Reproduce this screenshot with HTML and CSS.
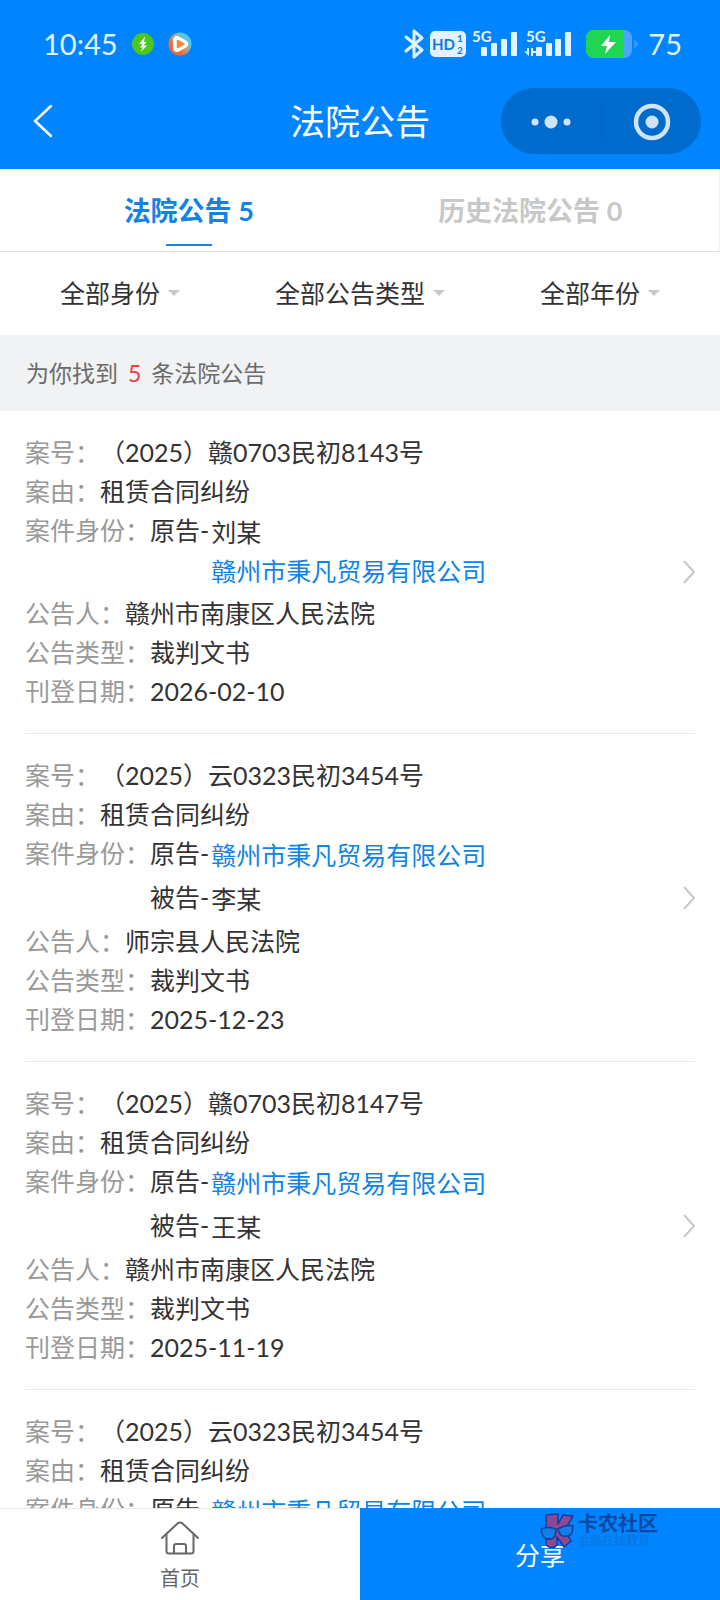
FILE: index.html
```html
<!DOCTYPE html>
<html lang="zh-CN">
<head>
  <meta charset="UTF-8">
  <meta name="viewport" content="width=device-width, initial-scale=1.0">
  <title>法院公告</title>
  <link rel="stylesheet" href="styles.css">
</head>
<body>
  <header class="header">
    <div class="status-bar">
      <div class="status-left">
        <span class="time">10:45</span>
        <svg width="22" height="22" viewBox="0 0 22 22">
          <circle cx="11" cy="11" r="11" fill="#4cc71f"/>
          <path d="M13 3.500 7 11h3.500L8 14.500h3L8.500 19 15 12.500h-3.500L14.500 9H12z" fill="#fff"/>
        </svg>
        <svg class="player" width="24" height="24" viewBox="0 0 24 24">
          <defs>
            <linearGradient id="ring" x1="0" y1="1" x2="1" y2="0">
              <stop offset="0.300" stop-color="#f26a35"/>
              <stop offset="0.550" stop-color="#b8a08c"/>
              <stop offset="0.750" stop-color="#4fcbe8"/>
            </linearGradient>
          </defs>
          <circle cx="12" cy="12" r="11.500" fill="url(#ring)"/>
          <path d="M9 8v8l7-4z" fill="#fff" stroke="#fff" stroke-width="8" stroke-linejoin="round"/>
          <path d="M9.500 8.500v7l6.500-3.500z" fill="#f0883e" stroke="#f0883e" stroke-width="1.500" stroke-linejoin="round"/>
        </svg>
      </div>
      <div class="status-right">
        <svg width="20" height="30" viewBox="0 0 20 30">
          <path d="M2 8l16 13-8 7V2l8 7L2 22" fill="none" stroke="#e3f2ff" stroke-width="3" stroke-linejoin="round" stroke-linecap="round"/>
        </svg>
        <svg width="36" height="28" viewBox="0 0 36 28">
          <rect x="0" y="1" width="36" height="26" rx="5" fill="#e3f2ff"/>
          <g class="badge-text">
            <text x="2" y="20" font-size="15">HD</text>
            <text x="27" y="12" font-size="10">1</text>
            <text x="27" y="24" font-size="10">2</text>
          </g>
        </svg>
        <svg width="46" height="36" viewBox="0 -4 46 36">
          <text class="net-text" x="0" y="12" font-size="15">5G</text>
          <g fill="#e3f2ff">
            <rect x="9" y="17" width="6" height="9" rx="1"/>
            <rect x="19" y="13" width="6" height="13" rx="1"/>
            <rect x="29" y="9" width="6" height="17" rx="1"/>
            <rect x="39" y="2" width="6" height="24" rx="1"/>
          </g>
        </svg>
        <svg width="48" height="36" viewBox="0 -4 48 36">
          <text class="net-text" x="2" y="12" font-size="15">5G</text>
          <g fill="#e3f2ff">
            <path d="M3 18h2v8L0 21.500h3zM7 26h2v-3h3v3h2v-8h-2v3H9v-3H7z"/>
            <rect x="12" y="17" width="6" height="9" rx="1"/>
            <rect x="22" y="13" width="6" height="13" rx="1"/>
            <rect x="31" y="9" width="6" height="17" rx="1"/>
            <rect x="41" y="2" width="6" height="24" rx="1"/>
          </g>
        </svg>
        <svg class="battery" width="52" height="28" viewBox="0 0 52 28">
          <defs>
            <clipPath id="cell"><rect width="46" height="28" rx="8"/></clipPath>
          </defs>
          <g clip-path="url(#cell)">
            <rect width="46" height="28" fill="#4da5fb"/>
            <rect width="38" height="28" fill="#20d552"/>
          </g>
          <path d="M48 10q4 1 4 4t-4 4z" fill="#2f97fd"/>
          <path d="M24 5l-9 11h6l-2 8 11-12h-7z" fill="#fff"/>
        </svg>
        <span class="level">75</span>
      </div>
    </div>
    <nav class="nav-bar">
      <button class="back" aria-label="返回">
        <svg width="20" height="34" viewBox="0 0 20 34">
          <path d="M18 2 2 17l16 15" fill="none" stroke="#fff" stroke-width="2.500" stroke-linecap="round" stroke-linejoin="round"/>
        </svg>
      </button>
      <h1 class="title">法院公告</h1>
      <div class="capsule">
        <button aria-label="更多">
          <svg width="40" height="14" viewBox="0 0 40 14" fill="#cfe4f8">
            <circle cx="4" cy="7" r="3.500"/>
            <circle cx="20" cy="7" r="6.500"/>
            <circle cx="36" cy="7" r="3.500"/>
          </svg>
        </button>
        <button aria-label="关闭">
          <svg width="38" height="38" viewBox="0 0 38 38">
            <circle cx="19" cy="19" r="16" fill="none" stroke="#cfe4f8" stroke-width="4.500"/>
            <circle cx="19" cy="19" r="6.500" fill="#cfe4f8"/>
          </svg>
        </button>
      </div>
    </nav>
  </header>

  <div class="tabs">
    <button class="tab active">法院公告 5</button>
    <button class="tab">历史法院公告 0</button>
  </div>

  <div class="filters">
    <label class="filter">
      <select aria-label="身份"><option>全部身份</option></select>
      <span class="arrow"></span>
    </label>
    <label class="filter">
      <select aria-label="公告类型"><option>全部公告类型</option></select>
      <span class="arrow"></span>
    </label>
    <label class="filter">
      <select aria-label="年份"><option>全部年份</option></select>
      <span class="arrow"></span>
    </label>
  </div>

  <p class="summary">为你找到<span class="count">5</span>条法院公告</p>

  <main class="list">
    <article class="notice">
      <dl class="fields">
        <div class="row"><dt>案号：</dt><dd>（2025）赣0703民初8143号</dd></div>
        <div class="row"><dt>案由：</dt><dd>租赁合同纠纷</dd></div>
        <div class="row">
          <dt>案件身份：</dt>
          <dd>
            <div class="party">
              <span>原告-</span>
              <div class="names">
                <span>刘某</span>
                <a href="#">赣州市秉凡贸易有限公司</a>
              </div>
            </div>
          </dd>
        </div>
        <div class="row"><dt>公告人：</dt><dd>赣州市南康区人民法院</dd></div>
        <div class="row"><dt>公告类型：</dt><dd>裁判文书</dd></div>
        <div class="row"><dt>刊登日期：</dt><dd>2026-02-10</dd></div>
      </dl>
      <a class="more" href="#" aria-label="查看详情">
        <svg width="12" height="24" viewBox="0 0 12 24"><path d="M1 1l10 11-10 11"/></svg>
      </a>
    </article>

    <article class="notice">
      <dl class="fields">
        <div class="row"><dt>案号：</dt><dd>（2025）云0323民初3454号</dd></div>
        <div class="row"><dt>案由：</dt><dd>租赁合同纠纷</dd></div>
        <div class="row">
          <dt>案件身份：</dt>
          <dd>
            <div class="party">
              <span>原告-</span>
              <div class="names"><a href="#">赣州市秉凡贸易有限公司</a></div>
            </div>
            <div class="party">
              <span>被告-</span>
              <div class="names"><span>李某</span></div>
            </div>
          </dd>
        </div>
        <div class="row"><dt>公告人：</dt><dd>师宗县人民法院</dd></div>
        <div class="row"><dt>公告类型：</dt><dd>裁判文书</dd></div>
        <div class="row"><dt>刊登日期：</dt><dd>2025-12-23</dd></div>
      </dl>
      <a class="more" href="#" aria-label="查看详情">
        <svg width="12" height="24" viewBox="0 0 12 24"><path d="M1 1l10 11-10 11"/></svg>
      </a>
    </article>

    <article class="notice">
      <dl class="fields">
        <div class="row"><dt>案号：</dt><dd>（2025）赣0703民初8147号</dd></div>
        <div class="row"><dt>案由：</dt><dd>租赁合同纠纷</dd></div>
        <div class="row">
          <dt>案件身份：</dt>
          <dd>
            <div class="party">
              <span>原告-</span>
              <div class="names"><a href="#">赣州市秉凡贸易有限公司</a></div>
            </div>
            <div class="party">
              <span>被告-</span>
              <div class="names"><span>王某</span></div>
            </div>
          </dd>
        </div>
        <div class="row"><dt>公告人：</dt><dd>赣州市南康区人民法院</dd></div>
        <div class="row"><dt>公告类型：</dt><dd>裁判文书</dd></div>
        <div class="row"><dt>刊登日期：</dt><dd>2025-11-19</dd></div>
      </dl>
      <a class="more" href="#" aria-label="查看详情">
        <svg width="12" height="24" viewBox="0 0 12 24"><path d="M1 1l10 11-10 11"/></svg>
      </a>
    </article>

    <article class="notice">
      <dl class="fields">
        <div class="row"><dt>案号：</dt><dd>（2025）云0323民初3454号</dd></div>
        <div class="row"><dt>案由：</dt><dd>租赁合同纠纷</dd></div>
        <div class="row">
          <dt>案件身份：</dt>
          <dd>
            <div class="party">
              <span>原告-</span>
              <div class="names"><a href="#">赣州市秉凡贸易有限公司</a></div>
            </div>
          </dd>
        </div>
      </dl>
    </article>
  </main>

  <footer class="bottom-bar">
    <a class="home" href="#">
      <svg width="40" height="34" viewBox="0 0 40 34" fill="none" stroke="#666" stroke-width="2" stroke-linejoin="round" stroke-linecap="round">
        <path d="M2 17 17.500 2.500q2.500-2 5 0L38 17"/>
        <path d="M6.500 14v16q0 2.500 2.500 2.500h22q2.500 0 2.500-2.500V14"/>
        <path d="M14 32v-7q0-2 2-2h8q2 0 2 2v7"/>
      </svg>
      <span>首页</span>
    </a>
    <button class="share">分享</button>
    <div class="watermark">
      <svg width="34" height="36" viewBox="0 0 34 36" stroke="#0b3f97" stroke-width="1.500" stroke-linejoin="round">
        <path d="M6 2l12-1v10l5-9 10 1-8 14 6 11-7 6-7-10v8q-3 4-8 2L6 32z" fill="#8c4795"/>
        <path d="M1 16q8-3 15 0l-1 7q-4 5-10 2-3-2-4-9z" fill="#1280ec"/>
        <path d="M18 16q8-5 15-3l-1 7q-3 4-9 3-4-1-5-7z" fill="#1280ec"/>
      </svg>
      <div class="watermark-text">
        <strong>卡农社区</strong>
        <small>金融在线教育</small>
      </div>
    </div>
  </footer>
</body>
</html>
```
FILE: styles.css
```css
* {
  box-sizing: border-box;
}

body {
  display: flex;
  flex-direction: column;
  height: 100vh;
  margin: 0;
  font-family: Lato, "Noto Sans CJK SC", sans-serif;
  font-size: 25px;
  color: #333;
  background-color: #fff;
}

h1, p, dl, dd {
  margin: 0;
}

button, select {
  padding: 0;
  border: 0;
  background: none;
  font-family: inherit;
  font-size: inherit;
  color: inherit;
  cursor: pointer;
}

a {
  color: #0f84e6;
  text-decoration: none;
}

svg {
  display: block;
}

.header {
  background-color: #0084ff;
  color: #fff;
}

.status-bar {
  display: flex;
  justify-content: space-between;
  align-items: center;
  padding: 22px 38px 8px 43px;
  height: 73px;
  font-size: 29px;
  color: #e3f2ff;
}

.status-left, .status-right {
  display: flex;
  align-items: center;
}

.status-left svg {
  margin-left: 14px;
}

.status-right {
  gap: 6px;
}

.battery {
  margin: 0 4px 0 8px;
}

.badge-text {
  fill: #0b78e3;
  font-weight: bold;
}

.net-text {
  fill: #e3f2ff;
  font-weight: bold;
}

.nav-bar {
  display: grid;
  grid-template-columns: 1fr auto 1fr;
  align-items: center;
  height: 96px;
  padding: 0 19px;
}

.back {
  justify-self: start;
  margin-left: 14px;
}

.title {
  padding-bottom: 4px;
  font-size: 35px;
  font-weight: normal;
}

.capsule {
  display: grid;
  grid-template-columns: 1fr 1fr;
  justify-self: end;
  width: 200px;
  height: 66px;
  border-radius: 33px;
  background-color: #006acd;
}

.capsule button {
  display: flex;
  justify-content: center;
  align-items: center;
}

.capsule button + button {
  margin: 15px 0;
  border-left: 1px solid #0562b9;
}

.tabs {
  display: grid;
  grid-template-columns: 1fr 1fr;
  height: 83px;
  padding: 0 18px;
  border-right: 1px solid #eee;
  border-bottom: 1px solid #e2e2e2;
}

.tab {
  position: relative;
  padding-bottom: 2px;
  font-size: 27px;
  font-weight: bold;
  color: #c8c8c8;
}

.tab.active {
  color: #0f84e6;
}

.tab.active::after {
  content: "";
  position: absolute;
  left: 50%;
  bottom: 5px;
  width: 46px;
  height: 2px;
  margin-left: -23px;
  background-color: #1a82e4;
}

.filters {
  display: grid;
  grid-template-columns: 1fr 1fr 1fr;
  height: 83px;
  padding-bottom: 2px;
}

.filter {
  display: flex;
  justify-content: center;
  align-items: center;
  gap: 7px;
}

.filter select {
  appearance: none;
}

.arrow {
  border: 6px solid transparent;
  border-top-color: #c9c9c9;
  border-bottom: 0;
}

.summary {
  padding: 0 26px;
  line-height: 76px;
  font-size: 23px;
  color: #6b6b6b;
  background-color: #f0f2f4;
}

.count {
  margin: 0 10px;
  color: #f23c3c;
}

.list {
  flex: 1;
  min-height: 0;
  overflow-y: auto;
  scrollbar-width: none;
  padding: 0 25px;
}

.notice {
  display: flex;
  justify-content: space-between;
  align-items: center;
  padding: 22px 0;
  border-bottom: 1px solid #eaeaea;
  line-height: 39px;
}

.row {
  display: flex;
}

dt {
  color: #999;
}

.party {
  display: flex;
}

.names {
  display: flex;
  flex-direction: column;
  padding: 2px 0 3px 2px;
}

.more path {
  fill: none;
  stroke: #c8c8c8;
  stroke-width: 2;
}

.bottom-bar {
  position: relative;
  display: grid;
  grid-template-columns: 1fr 1fr;
  height: 92px;
}

.home {
  display: flex;
  flex-direction: column;
  align-items: center;
  gap: 9px;
  padding-top: 12px;
  border-top: 1px solid #e8e8e8;
  font-size: 20px;
  line-height: 28px;
  color: #666;
}

.share {
  background-color: #0084ff;
  color: #fff;
}

/* logo stamp over the share button */
.watermark {
  position: absolute;
  top: 5px;
  right: 62px;
  display: flex;
  gap: 4px;
  pointer-events: none;
}

.watermark-text {
  display: flex;
  flex-direction: column;
  color: #07489f;
}

.watermark strong {
  font-size: 20px;
  line-height: 20px;
}

.watermark small {
  font-size: 12px;
  line-height: 16px;
  color: #0b74da;
}
```
